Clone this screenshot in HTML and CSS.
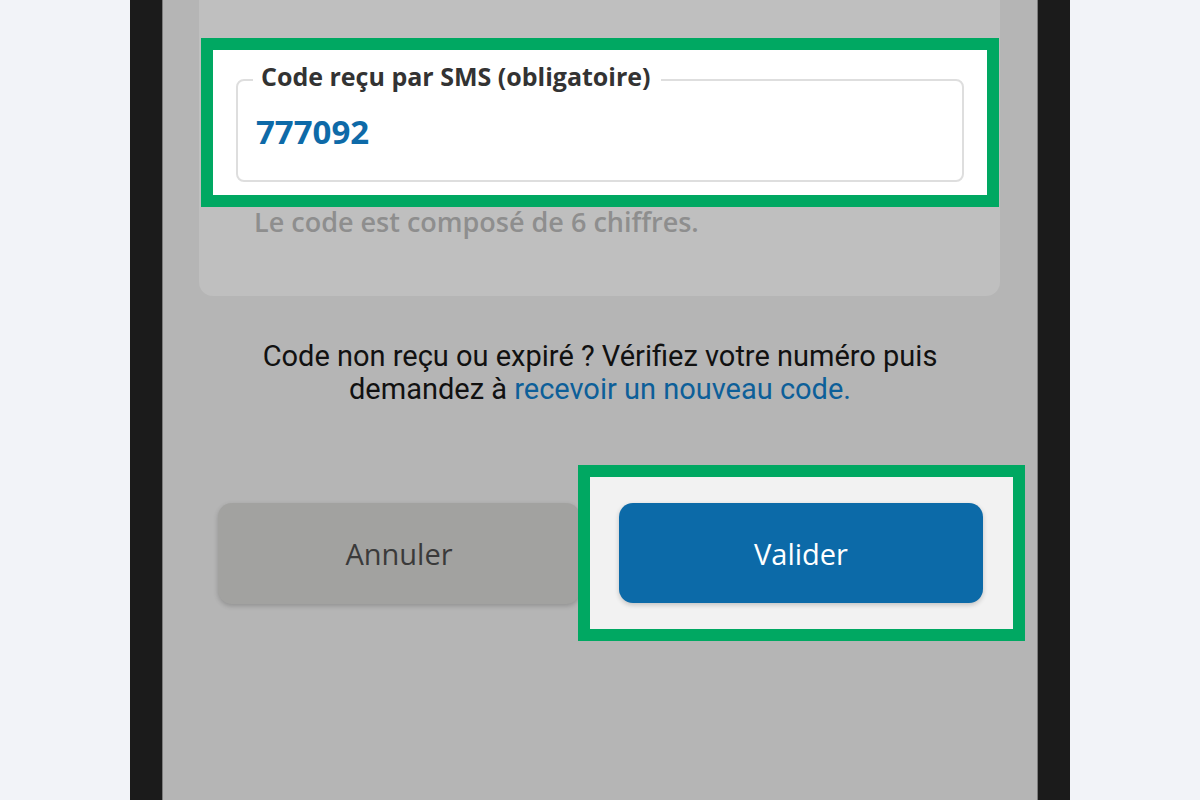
FILE: index.html
```html
<!DOCTYPE html>
<html lang="fr">
<head>
    <meta charset="UTF-8">
    <meta name="viewport" content="width=device-width, initial-scale=1.0">
    <title>Code reçu par SMS</title>
    <link rel="stylesheet" href="styles.css">
</head>
<body>
    <div class="phone">
        <div class="screen">
            <div class="card">
                <div class="highlight field-highlight">
                    <fieldset class="code-field">
                        <legend>Code reçu par SMS (obligatoire)</legend>
                        <div class="code-value">777092</div>
                    </fieldset>
                </div>
                <p class="hint">Le code est composé de 6 chiffres.</p>
            </div>

            <p class="resend">
                Code non reçu ou expiré ? Vérifiez votre numéro puis<br>
                demandez à <a href="#" class="resend-link">recevoir un nouveau code.</a>
            </p>

            <div class="actions">
                <button class="btn btn-cancel">Annuler</button>
                <div class="highlight btn-highlight">
                    <button class="btn btn-submit">Valider</button>
                </div>
            </div>
        </div>
    </div>
</body>
</html>
```

FILE: styles.css
```css
body {
    margin: 0;
    padding: 0;
    background-color: #f2f3f8;
    font-family: 'Open Sans', 'Noto Sans', sans-serif;
    overflow: hidden;
}

.phone {
    width: 876px;
    height: 800px;
    margin: 0 130px;
    padding: 0 32px;
    background-color: #1b1b1b;
}

.screen {
    height: 800px;
    background-color: #b5b5b5;
    border-left: 1px solid #7c7c7c;
    border-right: 1px solid #7c7c7c;
    display: flex;
    flex-direction: column;
}

.card {
    margin: 0 37px 0 36px;
    padding: 38px 1px 59px 2px;
    background-color: #bfbfbf;
    border-radius: 0 0 14px 14px;
}

.highlight {
    border: 12px solid #00a862;
}

.field-highlight {
    background-color: #fff;
    padding: 14px 23px 13px;
}

.code-field {
    margin: 0;
    padding: 0 15px 28px;
    border: 2px solid #dedede;
    border-radius: 8px;
}

/* text sits a little above the border line */
.code-field legend {
    padding: 0 10px 8px 8px;
    font-size: 25px;
    font-weight: 700;
    color: #333;
    line-height: 24px;
}

.code-value {
    margin: 16px 0 0 3px;
    font-size: 33px;
    font-weight: 700;
    color: #0e6aa8;
    line-height: 40px;
}

.hint {
    margin: 0 0 0 53px;
    font-size: 27px;
    font-weight: 600;
    color: #8e8e8e;
    line-height: 30px;
}

.resend {
    margin: 44px 0 0;
    text-align: center;
    font-family: Roboto, sans-serif;
    font-size: 29px;
    line-height: 33px;
    color: #111;
}

.resend-link {
    color: #0d5f99;
    text-decoration: none;
}

.actions {
    display: flex;
    align-items: center;
    margin: 59px 0 0 55px;
}

.btn {
    border: none;
    border-radius: 14px;
    font-family: 'Open Sans', 'Noto Sans', sans-serif;
    font-size: 29px;
    cursor: pointer;
    box-shadow: 0 2px 5px rgba(0, 0, 0, 0.2);
}

.btn-cancel {
    width: 362px;
    height: 101px;
    background-color: #a2a2a0;
    color: #3a3a3a;
}

.btn-highlight {
    margin-left: -2px;
    padding: 26px 30px 26px 29px;
    background-color: #f2f2f2;
}

.btn-submit {
    display: block;
    width: 364px;
    height: 100px;
    background-color: #0c6aa8;
    color: #fff;
}
```
